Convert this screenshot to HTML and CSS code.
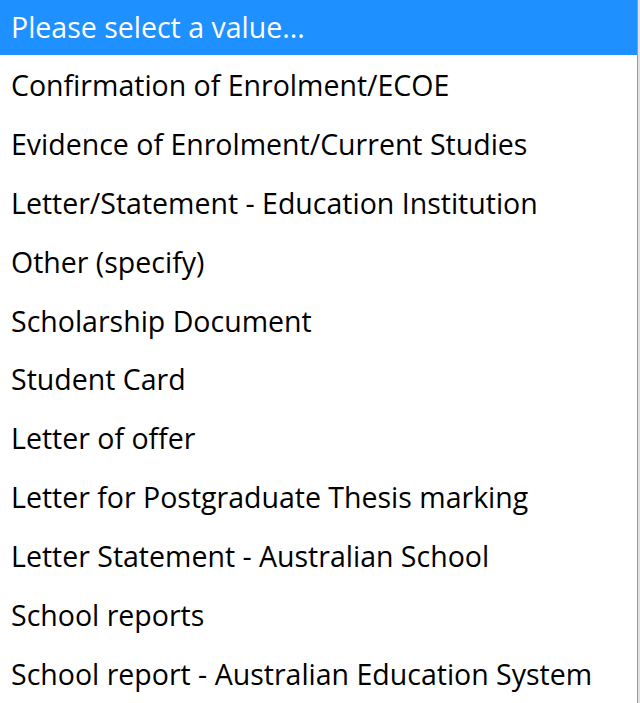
FILE: index.html
```html
<!DOCTYPE html>
<html lang="en">
<head>
    <meta charset="UTF-8">
    <meta name="viewport" content="width=device-width, initial-scale=1.0">
    <title>Select</title>
    <link rel="stylesheet" href="styles.css">
</head>
<body>
    <div class="page">
        <ul class="dropdown">
            <li class="option selected">Please select a value...</li>
            <li class="option">Confirmation of Enrolment/ECOE</li>
            <li class="option">Evidence of Enrolment/Current Studies</li>
            <li class="option">Letter/Statement - Education Institution</li>
            <li class="option">Other (specify)</li>
            <li class="option">Scholarship Document</li>
            <li class="option">Student Card</li>
            <li class="option">Letter of offer</li>
            <li class="option">Letter for Postgraduate Thesis marking</li>
            <li class="option">Letter Statement - Australian School</li>
            <li class="option">School reports</li>
            <li class="option">School report - Australian Education System</li>
        </ul>
        <div class="behind"></div>
    </div>
</body>
</html>
```

FILE: styles.css
```css
* {
    margin: 0;
    padding: 0;
    box-sizing: border-box;
}

body {
    font-family: "Open Sans", "Noto Sans", sans-serif;
    background-color: #e6e6e6;
    height: 703px;
    overflow: hidden;
}

.page {
    display: flex;
    height: 703px;
}

.dropdown {
    list-style: none;
    width: 638px;
    background: white;
    border-right: 1px solid #9a9a9a;
}

.behind {
    flex: 1;
    background: #e2e2e2;
}

.option {
    height: 58.9px;
    line-height: 58.9px;
    padding-left: 11px;
    padding-top: 1px;
    font-size: 28.5px;
    color: #000;
    white-space: nowrap;
}

.option.selected {
    height: 55px;
    line-height: 55px;
    padding-top: 0;
    background: #1e90ff;
    color: white;
}
```
